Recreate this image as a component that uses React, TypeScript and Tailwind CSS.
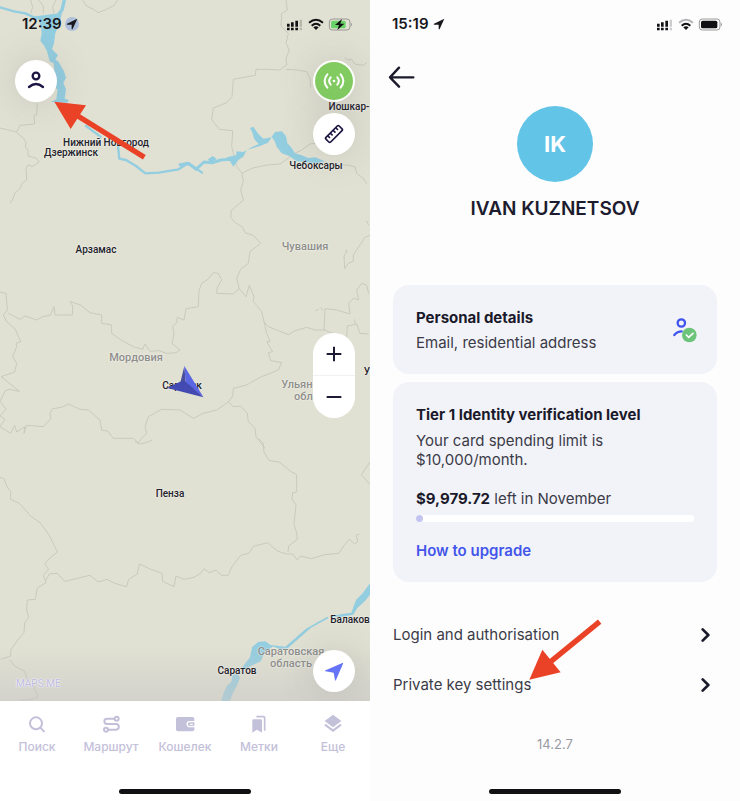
import type { ReactNode } from "react";

const places = [
  { name: "Нижний Новгород", at: "left-[106px] top-[143px]" },
  { name: "Дзержинск", at: "left-[71px] top-[153px]" },
  { name: "Йошкар-", at: "left-[349px] top-[107px]" },
  { name: "Чебоксары", at: "left-[316px] top-[166px]" },
  { name: "Арзамас", at: "left-[96px] top-[250px]" },
  { name: "Саранск", at: "left-[182px] top-[386px]" },
  { name: "У", at: "left-[367px] top-[372px]" },
  { name: "Пенза", at: "left-[170px] top-[494px]" },
  { name: "Балаков", at: "left-[350px] top-[620px]" },
  { name: "Саратов", at: "left-[237px] top-[671px]" },
];

const regions = [
  { name: "Чувашия", at: "left-[305px] top-[247px]" },
  { name: "Мордовия", at: "left-[136px] top-[358px]" },
  { name: "Ульяновская область", at: "left-[315px] top-[391px]" },
  { name: "Саратовская область", at: "left-[291px] top-[658px]" },
];

function StatusBar({ time, charging = false }: { time: string; charging?: boolean }) {
  return (
    <div className="flex h-12 items-center justify-between pr-[17px] pl-[22px]">
      <div className="flex items-center gap-[3px]">
        <span className="text-[15px] leading-5 font-semibold text-[#17171c]">{time}</span>
        <span className={charging ? "rounded-full bg-[#aebfdc] p-px" : "p-px"}>
          <svg viewBox="0 0 36 36" className="size-3" fill="#17171c">
            <path d="M34 2 20 33q-2 3-3-1V20H4q-4-1-1-3z" />
          </svg>
        </span>
      </div>
      <svg viewBox="0 0 198 39" className="h-[13px] w-[66px]" fill="#111114">
        <path d="M0 17h8v9H0zM12 13h8v13h-8zM25 8h8v18h-8zM0 29h8v8H0zM12 29h8v8h-8zM25 29h8v8h-8z" />
        <path d="M38 5h7v21h-7zM38 29h7v8h-7z" opacity=".2" />
        <g fill="none" stroke="#111114" strokeWidth="6">
          <path d="M66 14q21-18 42 0" opacity={charging ? 1 : 0.3} />
          <path d="M74 23q13-11 26 0" />
        </g>
        <path d="m87 36-8-8q8-6 16 0z" />
        <rect x="127" y="3" width="62" height="33" rx="9" fill="none" stroke="#9a9a96" strokeWidth="3" />
        <path d="M192 14q6 5 0 11z" fill="#9a9a96" />
        {charging ? (
          <>
            <rect x="132" y="8" width="44" height="23" rx="5" fill="#69d268" />
            <path d="m165 3-21 18h12l-5 15 21-19h-12z" />
          </>
        ) : (
          <rect x="132" y="8" width="49" height="23" rx="5" />
        )}
      </svg>
    </div>
  );
}

function HomeIndicator() {
  return <div className="mx-auto mt-auto mb-[7px] h-[5px] w-[132px] rounded-full bg-[#111114]" />;
}

function MapTerrain() {
  return (
    <svg
      viewBox="0 0 1110 2103"
      preserveAspectRatio="xMidYMin slice"
      className="absolute inset-0 size-full"
      aria-hidden="true"
    >
      <g fill="none" stroke="#c9c9bf" strokeWidth="3" strokeLinejoin="round">
        <path d="M248 0l12 18 24 12 10 8 22-8 26-14 10-16M92 0l6 22-6 18M116 0l14 18 0 22M168 0l-10 20 4 20" />
        <path d="M112 310l-2 34-8 4 2 24-44 4-10 20-50-12M50 398l20 16 8 14-2 12 8 12 0 16 24 6 10 12-22 14-12-6-6 12 2 34-14 10-6 16-16 14-4 14-10 16" />
      </g>
      <g transform="translate(540 0)" fill="none" stroke="#c9c9bf" strokeWidth="3" strokeLinejoin="round">
        <path d="M318 0 322 30 305 40 303 78 325 100 318 130 328 150 318 175 320 195 300 210 260 208 228 208 226 226 160 238 156 290 140 308 100 324 95 358 118 388 158 392 155 440 170 500 186 520 190 545 182 570 190 600" />
        <path d="M186 520 215 505 260 495 300 492 320 478 340 462 365 450 390 432 405 430M435 484 445 495 500 495 525 500 530 520 550 535 560 552M318 208 350 210 380 215 390 235 392 262M495 172 502 180 515 178 524 192 550 196 560 188" />
      </g>
      <g transform="translate(0 600)" fill="none" stroke="#c9c9bf" strokeWidth="3" strokeLinejoin="round">
        <path d="M730 0 694 32 692 52 706 68 728 82 735 98 760 106 782 130 750 155 745 190 722 208 710 235 718 266 700 282 650 280 652 262 665 240 655 220 640 218 624 238 605 250 597 272 595 320 558 326 552 360 532 352 530 368 518 380 522 400 516 430 540 450 528 458 500 460 478 452 450 454 435 432 428 448 400 440 360 418 335 400 335 375 305 370 305 345 270 338 240 314 210 305 218 317 217 345 165 345 162 320 150 346 128 350 110 360 75 348 60 358 25 340" />
        <path d="M718 266 738 290 748 256 762 290 760 304 785 335 792 365 805 380 865 404 885 392 920 382 945 390 972 390 975 326 1010 330 1050 342 1046 310 1062 294 1076 300 1070 270 1085 250 1100 256 1106 280M972 390 1000 400M1110 106 1095 112 1060 165 1060 184 1045 190 1034 206 1032 168 1042 150" />
        <path d="M1040 412 1042 378 1070 372 1080 400 1106 402M792 365 800 400 810 425 800 425 818 455 805 458 812 482 845 488 835 510 780 532 740 555 700 565 698 588 685 606 650 630 610 640 580 655 540 630 485 628 445 650 435 680 440 700 425 715 415 728 400 715 340 715 324 694 305 690 300 660 265 630 240 628 205 612 185 622 158 626 150 640 152 656 130 680 80 676 72 700 74 680 50 696 44 676 32 700 0 680" />
        <path d="M685 606 700 620 722 618 742 640 745 665 765 685 768 710 795 745M0 680 15 658 0 648 18 628 0 604 16 572 30 568 58 574 4 530 44 516 50 490 38 470 50 440 48 430 62 425 46 388 20 365 10 345 22 330 18 280 0 276" />
        <path d="M946 332l10-4M962 322l6 10M1036 150l6 8M1064 358l2 14M1100 62l6 14" />
      </g>
      <g transform="translate(0 1320)" fill="none" stroke="#c9c9bf" strokeWidth="3" strokeLinejoin="round">
        <path d="M0 112l12 4 8 22 12 16 0 24 26 12 34 38 28 20 28 38 24 50-22 18-16 18 12 16-16 18 8 22-26 16-6 34-24 2-2 30 6 22-12 16-2 30-20 24-20 28 0 18-30 10M30 660l14 18 30 16 10 30 16 12 14 36-28 8-28 0" />
        <path d="M136 424l12-22 24-2 22 24 76-18 24 20 28-8 22 12 36 10 6-22 26-16 6-30 30 14 38 14 2 24 34 16 6-32 24 10 30-6 20-12 10-14 16 12 20-8 16 16 20 0 12-26 26-34 24-6 16-22 42-10 10 10 20 16 26 8 18 0 14 18 10-12 32 8 40-12 42-4 18-26 14-16 16 14 10-8-6-18 10-4M864 336l2-18 26-20-2-20-8-24 6-60-12-16 2-20 12-2 0-52-18-10-34-28-30-4-16-24-2-28-14-14M1110 66l-26 38 26 30" />
        <path d="M404 4l14 8 20-4 18-8" />
      </g>
      <g fill="none" stroke="#93cde0" strokeLinejoin="round" strokeLinecap="round">
        <path d="M0 22l42 12 34 6 34 16" strokeWidth="7" />
        <path d="M193 0l-7 30-22 28-16 50" strokeWidth="10" />
        <path d="M258 378l30 22 14 10M354 440l4 36 20 4 30 18 28 22 40-2 60-10 24-16 18 6 28 20" strokeWidth="7" />
        <path d="M540 494l26-4 22 18 24-22 26 2 24-8 30-2" strokeWidth="9" />
      </g>
      <g fill="#93cde0">
        <path d="M98 50l88-12-6 28-14 34-4 30-6 18 18 18-8 12 10 8 16 28 6 20-8 14 8 20-4 28 12 4-3 8-50-2 16-8 4-30-18-8 10-30-4-40-12-6-8-30-8-16-12-16 4-22-2-20-8-22z" />
        <path d="M624 478l14-10 12 8-18 14z" />
      </g>
      <g transform="translate(540 0)" fill="#93cde0">
        <path d="M275 410 285 396 305 394 318 408 322 430 335 444 345 460 365 466 385 474 405 472 435 484 410 490 370 486 350 484 328 468 305 460 290 440 284 424z" />
        <path d="M210 384 220 380 235 402 250 416 275 412 264 428 240 438 200 450 190 470 175 480 160 500 150 484 140 472 168 466 170 454 190 456 215 442 236 432 222 416 218 400z" />
      </g>
      <g transform="translate(0 1320)" fill="#93cde0">
        <path d="M664 783l6-22 10-22 14-14 4-20 14-4 8 12-10 26-12 22-8 22zM722 688l28-36 6-30 18-16 22-2 22 16-24 16-12 28-30 14-14 10z" />
        <path d="M806 614l50 6 62-54 64-36 3 5-52 28-70 62-24 2zM984 530l42-8 28-4 14-38 20-20 22-30v34l-16 20-22 20-12 20-34 6z" />
      </g>
    </svg>
  );
}

function RoundButton({ label, children }: { label: string; children: ReactNode }) {
  return (
    <button
      type="button"
      aria-label={label}
      className="flex size-[42px] items-center justify-center rounded-full bg-white shadow-[0_0_36px_rgba(90,90,100,0.22)]"
    >
      {children}
    </button>
  );
}

const tabs = [
  {
    label: "Поиск",
    icon: (
      <g fill="none" stroke="currentColor" strokeWidth="6" strokeLinecap="round">
        <circle cx="27" cy="28" r="18" />
        <path d="m40 41 11 11" />
      </g>
    ),
  },
  {
    label: "Маршрут",
    icon: (
      <g fill="none" stroke="currentColor" strokeWidth="6">
        <circle cx="47" cy="14" r="6" />
        <circle cx="15" cy="47" r="6" />
        <path d="M41 14H18a8 8 0 0 0 0 16h27a8 8 0 0 1 0 17H21" />
      </g>
    ),
  },
  {
    label: "Кошелек",
    icon: (
      <>
        <rect x="3" y="9" width="55" height="43" rx="6" fill="currentColor" />
        <path d="M60 23H44a7 7 0 0 0 0 15h16" fill="none" stroke="#fff" strokeWidth="4" />
        <path d="M46 31h6" stroke="#fff" strokeWidth="4" strokeLinecap="round" />
      </>
    ),
  },
  {
    label: "Метки",
    icon: (
      <>
        <path d="M10 20q0-4 4-4h21q4 0 4 4v36l-15-9-14 9z" fill="currentColor" />
        <path d="M22 8h21q4 0 4 4v38" fill="none" stroke="currentColor" strokeWidth="5" />
      </>
    ),
  },
  {
    label: "Еще",
    icon: (
      <>
        <path d="M30 2 55 21 30 40 5 21z" fill="currentColor" />
        <path d="m6 32 24 18 24-18" fill="none" stroke="currentColor" strokeWidth="6" />
      </>
    ),
  },
];

function MapScreen() {
  return (
    <section className="flex min-w-0 flex-1 flex-col bg-white">
      <div className="relative flex flex-1 flex-col overflow-hidden bg-[#e1e1d3]">
        <MapTerrain />
        <div className="absolute inset-x-0 bottom-0 h-14 bg-linear-to-b from-transparent to-[#c9c8c6]/60" />
        {places.map((p) => (
          <span
            key={p.name}
            className={`absolute -translate-x-1/2 -translate-y-1/2 font-['Roboto',sans-serif] text-[10px] leading-3 font-medium whitespace-nowrap text-[#22222a] [text-shadow:0_0_2px_#fff] ${p.at}`}
          >
            {p.name}
          </span>
        ))}
        {regions.map((r) => (
          <span
            key={r.name}
            className={`absolute w-min -translate-x-1/2 -translate-y-1/2 text-center font-['Roboto',sans-serif] text-[11px] leading-3 font-medium text-[#8e8e8b] [text-shadow:0_0_2px_#fff] ${r.at}`}
          >
            {r.name}
          </span>
        ))}
        <span className="absolute bottom-[11px] left-4 font-['Roboto',sans-serif] text-[10px] leading-3 text-[#bdb9e2] [text-shadow:0_0_1px_#fff,0_0_2px_#fff]">
          MAPS.ME
        </span>
        <svg viewBox="0 0 111 97" className="absolute top-[366px] left-[167px] h-[32px] w-[37px]">
          <path d="M52 0 56 50 40 50z" fill="#484e9b" />
          <path d="M52 0 110 95 56 50z" fill="#5b66e2" />
          <path d="M0 67 42 46 56 48 110 95z" fill="#434ab2" />
        </svg>

        <div className="relative flex flex-1 flex-col">
          <StatusBar time="12:39" charging />
          <div className="flex flex-1 justify-between px-[15px] pt-3 pb-[9px]">
            <div>
              <RoundButton label="Профиль">
                <svg viewBox="0 0 60 60" className="size-5" fill="none" stroke="#1d1642" strokeWidth="7" strokeLinecap="round">
                  <circle cx="30" cy="15" r="10" />
                  <path d="M9 48q21-18 42 0" />
                </svg>
              </RoundButton>
            </div>
            <div className="flex flex-col">
              <RoundButton label="Трансляция">
                <span className="flex size-[38px] items-center justify-center rounded-full bg-[#82cb61]">
                  <svg viewBox="0 0 72 60" className="h-5 w-6" fill="none" stroke="#fff" strokeWidth="6" strokeLinecap="round">
                    <circle cx="36" cy="30" r="4" fill="#fff" stroke="none" />
                    <path d="M26 19q-9 11 0 22M46 19q9 11 0 22M16 10q-16 20 0 40M56 10q16 20 0 40" />
                  </svg>
                </span>
              </RoundButton>
              <div className="mt-[11px]">
                <RoundButton label="Линейка">
                  <svg viewBox="0 0 60 60" className="size-5" fill="none" stroke="#1d1642" strokeWidth="5" strokeLinecap="round">
                    <g transform="rotate(-45 30 30)">
                      <rect x="2" y="20" width="56" height="20" rx="4" />
                      <path d="M13 21v7M24 21v7M36 21v7M47 21v7" />
                    </g>
                  </svg>
                </RoundButton>
              </div>
              <div className="mt-[178px] flex h-[85px] w-[42px] flex-col divide-y divide-[#f1f1f4] rounded-full bg-white">
                <button type="button" aria-label="Приблизить" className="flex flex-1 items-center justify-center">
                  <svg viewBox="0 0 48 48" className="size-4" stroke="#1d1a33" strokeWidth="6">
                    <path d="M24 2v44M2 24h44" />
                  </svg>
                </button>
                <button type="button" aria-label="Отдалить" className="flex flex-1 items-center justify-center">
                  <svg viewBox="0 0 48 48" className="size-4" stroke="#1d1a33" strokeWidth="6">
                    <path d="M2 24h44" />
                  </svg>
                </button>
              </div>
              <div className="mt-auto">
                <RoundButton label="Моё местоположение">
                  <svg viewBox="0 0 60 60" className="size-5" fill="#6573f6">
                    <path d="M55 6Q58 4 57 8L36 57q-2 4-3 0L29 35 5 31q-4-1 0-3z" />
                  </svg>
                </RoundButton>
              </div>
            </div>
          </div>
        </div>
        <svg viewBox="0 0 276 180" className="absolute top-[101px] left-[54px] h-[60px] w-[92px]" aria-hidden="true">
          <path d="M1 2 96 13 50 84z" fill="#ea4226" />
          <path d="M68 43 271 169" stroke="#ea4226" strokeWidth="16" />
        </svg>
      </div>

      <nav className="flex h-[100px] flex-col">
        <div className="grid grid-cols-5 pt-[13px]">
          {tabs.map((t) => (
            <button
              key={t.label}
              type="button"
              className="flex flex-col items-center gap-[5px] text-[12px] leading-4 font-medium text-[#c3c0d9]"
            >
              <svg viewBox="0 0 60 60" className="size-5" aria-hidden="true">
                {t.icon}
              </svg>
              {t.label}
            </button>
          ))}
        </div>
        <HomeIndicator />
      </nav>
    </section>
  );
}

function Chevron() {
  return (
    <svg viewBox="0 0 30 48" className="h-4 w-[10px]" fill="none" stroke="#1b1a2b" strokeWidth="8" strokeLinecap="round" strokeLinejoin="round">
      <path d="m5 7 17 17L5 41" />
    </svg>
  );
}

function ProfileScreen() {
  return (
    <section className="flex min-w-0 flex-1 flex-col bg-[#fdfdfe] text-[#3b3b47]">
      <StatusBar time="15:19" />
      <div className="flex h-[58px] items-center pl-[18px]">
        <button type="button" aria-label="Back">
          <svg viewBox="0 0 81 66" className="h-[22px] w-[27px]" fill="none" stroke="#1b1a2b" strokeWidth="7" strokeLinecap="round" strokeLinejoin="round">
            <path d="M76 34H6M33 5 6 34l27 28" />
          </svg>
        </button>
      </div>
      <div className="mx-auto flex size-[76px] items-center justify-center rounded-full bg-[#62c4e6] text-[22px] leading-7 font-bold text-white">
        IK
      </div>
      <h1 className="mt-[13px] text-center text-[19px] leading-7 font-semibold text-[#1d1c2e]">IVAN KUZNETSOV</h1>

      <div className="mt-[62px] flex flex-col gap-2 px-[23px]">
        <button type="button" className="flex items-center justify-between rounded-2xl bg-[#f2f3f9] pt-[23px] pr-5 pb-[21px] pl-[23px] text-left">
          <span className="flex flex-col gap-[5px] text-[15px] leading-5">
            <span className="font-bold text-[#1b1a2b]">Personal details</span>
            <span>Email, residential address</span>
          </span>
          <svg viewBox="0 0 72 75" className="h-[25px] w-6" fill="none" strokeLinecap="round">
            <g stroke="#4153ee" strokeWidth="7">
              <circle cx="25" cy="15" r="11" />
              <path d="M4 51q9-11 22-11" />
            </g>
            <circle cx="49" cy="51" r="22" fill="#6cc47b" />
            <path d="m40 51 7 7 13-12" stroke="#fff" strokeWidth="5" />
          </svg>
        </button>

        <article className="rounded-2xl bg-[#f2f3f9] px-[23px] pt-[23px] pb-[21px] text-[15px] leading-5">
          <h2 className="font-bold text-[#1b1a2b]">Tier 1 Identity verification level</h2>
          <p className="mt-[6px] leading-[19px]">
            Your card spending limit is
            <br />
            $10,000/month.
          </p>
          <p className="mt-5">
            <strong className="font-bold text-[#1b1a2b]">$9,979.72</strong> left in November
          </p>
          <div className="mt-[6px] h-[7px] rounded-full bg-white">
            <div className="size-[7px] rounded-full bg-[#c4c4f0]" />
          </div>
          <a href="#upgrade" className="mt-[19px] block font-semibold text-[#4355ea]">
            How to upgrade
          </a>
        </article>
      </div>

      <div className="mt-7 flex flex-col px-[23px] text-[15px] leading-5">
        <button type="button" className="flex h-[50px] items-center justify-between pr-[6px] text-left">
          Login and authorisation
          <Chevron />
        </button>
        <button type="button" className="relative flex h-[50px] items-center justify-between pr-[6px] text-left">
          Private key settings
          <Chevron />
          <svg viewBox="0 0 222 186" className="absolute bottom-[30px] left-[136px] h-[62px] w-[74px]" aria-hidden="true">
            <path d="M1 185 40 95 95 163z" fill="#ea4226" />
            <path d="M66 130 212 11" stroke="#ea4226" strokeWidth="16" />
          </svg>
        </button>
      </div>
      <p className="mt-6 text-center text-[13px] leading-5 text-[#9a9aa2]">14.2.7</p>
      <HomeIndicator />
    </section>
  );
}

export default function App() {
  return (
    <main className="flex min-h-screen font-['Inter','Liberation_Sans',sans-serif]">
      <MapScreen />
      <ProfileScreen />
    </main>
  );
}
